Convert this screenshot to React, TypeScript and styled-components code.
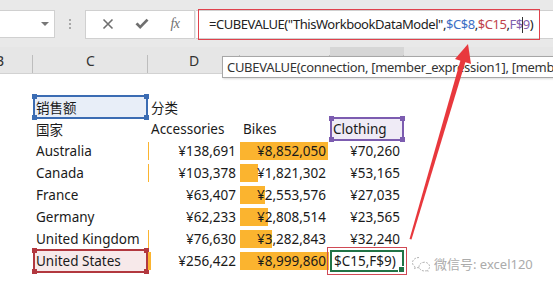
import styled, { createGlobalStyle } from "styled-components"

const GlobalStyle = createGlobalStyle`
  html, body {
    margin: 0;
    padding: 0;
    background: #fff;
  }
  body {
    font-family: "Noto Sans", "Noto Sans CJK SC", sans-serif;
    overflow: hidden;
  }
`

const Page = styled.div`
  position: relative;
  width: 553px;
  height: 290px;
  overflow: hidden;
  background: #fff;
`

const Toolbar = styled.div`
  height: 47px;
  background: #e9e9e9;
  display: flex;
  align-items: center;
  padding-top: 1px;
  box-sizing: border-box;
`

const NameBox = styled.div`
  width: 55px;
  height: 28px;
  background: #fff;
  border: 1px solid #d0d0d0;
  border-left: none;
  box-sizing: border-box;
  display: flex;
  align-items: center;
  justify-content: flex-end;
  padding-right: 5px;
`

const Caret = styled.span`
  width: 0;
  height: 0;
  border-left: 4px solid transparent;
  border-right: 4px solid transparent;
  border-top: 4px solid #777;
`

const Grip = styled.div`
  width: 30px;
  display: flex;
  flex-direction: column;
  align-items: center;
  gap: 2px;

  span {
    width: 2px;
    height: 2px;
    background: #a8a8a8;
  }
`

const ButtonGroup = styled.div`
  width: 110px;
  height: 29px;
  background: #fff;
  border: 1px solid #d0d0d0;
  box-sizing: border-box;
  display: flex;
  align-items: center;
  justify-content: space-around;
  padding: 0 4px 0 6px;
  color: #707070;
`

const Fx = styled.span`
  font-family: "Liberation Serif", "DejaVu Serif", serif;
  font-style: italic;
  font-size: 14px;
  color: #707070;
  letter-spacing: -0.5px;
`

const FormulaBox = styled.div`
  flex: 1;
  height: 29px;
  margin-left: 1px;
  background: #fff;
  border-top: 1px solid #d0d0d0;
  border-bottom: 1px solid #d0d0d0;
  box-sizing: border-box;
  display: flex;
  align-items: center;
  padding-left: 2px;
`

const FormulaFrame = styled.div`
  width: 342px;
  height: 31px;
  border: 1.5px solid #e0424c;
  box-sizing: border-box;
  display: flex;
  align-items: center;
  padding-left: 10px;
  font-size: 13px;
  color: #222;
  white-space: nowrap;
  letter-spacing: -0.45px;
`

const Ref = styled.span<{ $c: string }>`
  color: ${p => p.$c};
`

const Cursor = styled.span`
  display: inline-block;
  width: 1px;
  height: 16px;
  background: #333;
  vertical-align: middle;
  margin: 0 -0.5px;
`

const ColHeader = styled.div`
  display: grid;
  grid-template-columns: 33px 115px 92px 90px 74px 1fr;
  height: 27px;
  background: #e6e6e6;
  border-bottom: 1px solid #d2d2d2;
  box-sizing: border-box;
`

const ColLabel = styled.div<{ $active?: boolean; $clipped?: boolean }>`
  display: flex;
  align-items: center;
  justify-content: ${p => (p.$clipped ? "flex-start" : "center")};
  font-size: 14px;
  color: #333;
  background: ${p => (p.$active ? "#d6d6d6" : "transparent")};
  position: relative;
  overflow: hidden;

  span {
    margin-left: ${p => (p.$clipped ? "-5px" : "0")};
  }

  &::after {
    content: "";
    position: absolute;
    right: 0;
    top: 8px;
    bottom: 0;
    width: 1px;
    background: #bdbdbd;
  }
`

const Tooltip = styled.div`
  position: absolute;
  left: 222px;
  top: 56px;
  height: 22px;
  padding: 0 0 0 4px;
  width: 360px;
  background: #fff;
  border: 1px solid #a7a7a7;
  box-sizing: border-box;
  box-shadow: 1px 1px 2px rgba(0, 0, 0, 0.15);
  font-size: 13px;
  color: #333;
  display: flex;
  align-items: center;
  white-space: nowrap;
  letter-spacing: -0.3px;
`

const Sheet = styled.div`
  display: grid;
  grid-template-columns: 33px 115px 92px 90px 74px 1fr;
  grid-auto-rows: 22px;
  font-size: 13.5px;
  color: #1a1a1a;
`

const Cell = styled.div<{ $right?: boolean }>`
  position: relative;
  display: flex;
  align-items: center;
  justify-content: ${p => (p.$right ? "flex-end" : "flex-start")};
  padding: ${p => (p.$right ? "0 4px 0 0" : "0 0 0 3px")};
  white-space: nowrap;
  overflow: visible;
  min-width: 0;
`

const Label = styled.span`
  position: relative;
  z-index: 1;
`

const Bar = styled.span`
  position: absolute;
  left: 0;
  top: 2px;
  height: 18px;
  background: #fbb42f;
`

const selColors = {
  blue: { line: "#3b6cb3", fill: "#e8eef8" },
  purple: { line: "#7c5cb0", fill: "#efebf6" },
  red: { line: "#b2383f", fill: "#f7e9ea" },
}

type Kind = keyof typeof selColors

const Selection = styled.div<{ $kind: Kind }>`
  position: absolute;
  inset: -1px 0 -1px 0;
  border: 2px solid ${p => selColors[p.$kind].line};
  background: ${p => selColors[p.$kind].fill};
  box-sizing: border-box;
`

const Handle = styled.span<{ $kind: Kind; $v: "top" | "bottom"; $h: "left" | "right" }>`
  position: absolute;
  width: 5px;
  height: 5px;
  background: ${p => selColors[p.$kind].line};
  ${p => p.$v}: -3px;
  ${p => p.$h}: -3px;
`

const EditCell = styled.div`
  position: relative;
  display: flex;
  align-items: center;
  padding-left: 4px;
  font-size: 13.5px;
  color: #1a1a1a;
  outline: 1.5px solid #d04a55;
  outline-offset: 2px;
`

const ActiveBorder = styled.div`
  position: absolute;
  inset: 0;
  border: 2px solid #217346;
  pointer-events: none;

  &::after {
    content: "";
    position: absolute;
    right: -3px;
    bottom: -3px;
    width: 5px;
    height: 5px;
    background: #217346;
    border: 1px solid #fff;
  }
`

const Watermark = styled.div`
  display: flex;
  align-items: center;
  gap: 3px;
  padding-left: 4px;
  color: #ababab;
  font-size: 13px;
  white-space: nowrap;
  margin-top: 5px;
`

const Overlay = styled.svg`
  position: absolute;
  left: 0;
  top: 0;
  pointer-events: none;
`

function Selected({ kind, children }: { kind: Kind; children: React.ReactNode }) {
  return (
    <>
      <Selection $kind={kind}>
        <Handle $kind={kind} $v="top" $h="left" />
        <Handle $kind={kind} $v="top" $h="right" />
        <Handle $kind={kind} $v="bottom" $h="left" />
        <Handle $kind={kind} $v="bottom" $h="right" />
      </Selection>
      <Label>{children}</Label>
    </>
  )
}

const MAX = 8999860
const BAR = 89

const rows = [
  { country: "Australia", values: [138691, 8852050, 70260] },
  { country: "Canada", values: [103378, 1821302, 53165] },
  { country: "France", values: [63407, 2553576, 27035] },
  { country: "Germany", values: [62233, 2808514, 23565] },
  { country: "United Kingdom", values: [76630, 3282843, 32240] },
  { country: "United States", values: [256422, 8999860, 0] },
]

const yen = (n: number) => "¥" + n.toLocaleString("en-US")

function ValueCell({ value }: { value: number }) {
  const w = (value / MAX) * BAR
  return (
    <Cell $right>
      {w >= 0.75 && <Bar style={{ width: w }} />}
      <Label>{yen(value)}</Label>
    </Cell>
  )
}

function WeChatIcon() {
  return (
    <svg width="20" height="16" viewBox="0 0 20 16" fill="none" stroke="#b4b4b4" strokeWidth="1" strokeDasharray="2 1.2">
      <path d="M8 1.5C4.2 1.5 1.5 3.9 1.5 6.7c0 1.6.9 3 2.3 4l-.6 2 2.3-1.2c.8.2 1.6.3 2.5.3" />
      <path d="M13.5 6.2c-3 0-5.5 2-5.5 4.4s2.5 4.4 5.5 4.4c.6 0 1.2-.1 1.8-.3l1.8 1-.5-1.6c1.3-.9 2-2.1 2-3.5 0-2.4-2.4-4.4-5.1-4.4z" />
    </svg>
  )
}

export default function App() {
  // arrow: tail near the edited cell, tip at the formula bar
  const shaft = "M409.5 239 L411.5 239.5 L466 60 L461 58.5 Z"
  const head = "468,44 455,59 471,64"

  return (
    <Page>
      <GlobalStyle />
      <Toolbar>
        <NameBox>
          <Caret />
        </NameBox>
        <Grip>
          <span />
          <span />
          <span />
        </Grip>
        <ButtonGroup>
          <svg width="12" height="12" viewBox="0 0 12 12" stroke="#6f6f6f" strokeWidth="1.6">
            <path d="M1.5 1.5 L10.5 10.5 M10.5 1.5 L1.5 10.5" />
          </svg>
          <svg width="14" height="12" viewBox="0 0 14 12" fill="#6f6f6f">
            <path d="M0.5 6.3 L2.6 4.5 L5.2 7.2 L11.5 0.8 L13.5 2.6 L5.2 11 Z" />
          </svg>
          <Fx>fx</Fx>
        </ButtonGroup>
        <FormulaBox>
          <FormulaFrame>
            =CUBEVALUE("ThisWorkbookDataModel",<Ref $c="#3d6fc5">$C$8</Ref>,<Ref $c="#c0434b">$C15</Ref>,
            <Ref $c="#8060ad">
              F$<Cursor />9
            </Ref>
            )
          </FormulaFrame>
        </FormulaBox>
      </Toolbar>

      <ColHeader>
        <ColLabel $clipped>
          <span>B</span>
        </ColLabel>
        <ColLabel>C</ColLabel>
        <ColLabel>D</ColLabel>
        <ColLabel />
        <ColLabel $active />
        <div />
      </ColHeader>
      <Tooltip>CUBEVALUE(connection, [member_expression1], [member_expression2], …)</Tooltip>

      <Sheet>
        {/* row 7 — blank */}
        <Cell /><Cell /><Cell /><Cell /><Cell /><Cell />

        <Cell />
        <Cell>
          <Selected kind="blue">销售额</Selected>
        </Cell>
        <Cell>分类</Cell>
        <Cell /><Cell /><Cell />

        <Cell />
        <Cell>国家</Cell>
        <Cell>Accessories</Cell>
        <Cell>Bikes</Cell>
        <Cell>
          <Selected kind="purple">Clothing</Selected>
        </Cell>
        <Cell />

        {rows.map(r => {
          const last = r.country === "United States"
          return [
            <Cell key={r.country + "b"} />,
            <Cell key={r.country}>
              {last ? <Selected kind="red">{r.country}</Selected> : r.country}
            </Cell>,
            <ValueCell key={r.country + "0"} value={r.values[0]} />,
            <ValueCell key={r.country + "1"} value={r.values[1]} />,
            last ? (
              <EditCell key={r.country + "2"}>
                $C15,F$9)
                <ActiveBorder />
              </EditCell>
            ) : (
              <ValueCell key={r.country + "2"} value={r.values[2]} />
            ),
            <Cell key={r.country + "g"}>
              {last && (
                <Watermark>
                  <WeChatIcon />
                  微信号: excel120
                </Watermark>
              )}
            </Cell>,
          ]
        })}
      </Sheet>

      <Overlay width="553" height="290" viewBox="0 0 553 290">
        <path d={shaft} fill="#e8383d" />
        <polygon points={head} fill="#e8383d" />
      </Overlay>
    </Page>
  )
}
